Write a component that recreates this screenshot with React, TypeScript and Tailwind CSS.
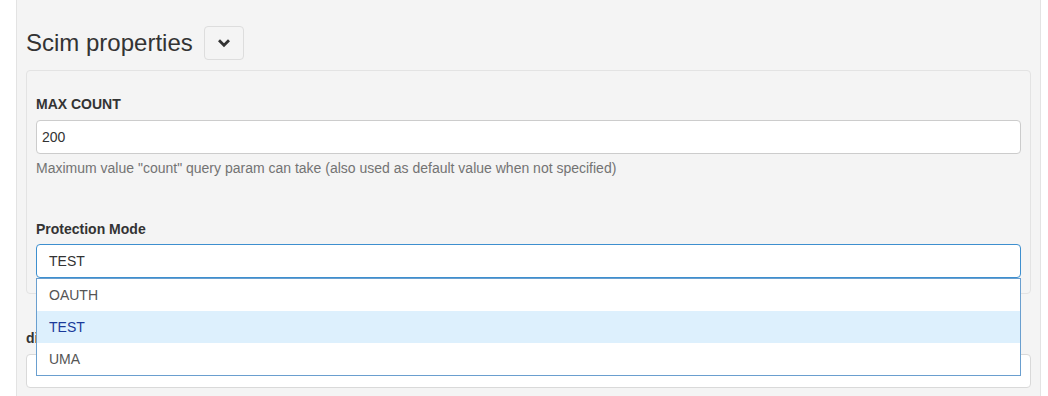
import { useState } from "react";

const options = ["OAUTH", "TEST", "UMA"];

function ChevronDown() {
  return (
    <svg width="12" height="9" viewBox="0 0 12 9" className="text-[#333]">
      <path d="M2 2.2 L6 6.2 L10 2.2" fill="none" stroke="currentColor" strokeWidth="2.8" strokeLinecap="square" />
    </svg>
  );
}

export default function App() {
  const [mode, setMode] = useState("TEST");

  return (
    <div className="h-[396px] w-[1048px] overflow-hidden bg-white pl-4 font-['Liberation_Sans',Arial,sans-serif] text-[14px] text-[#333]">
      <div className="h-full w-[1025px] border-x border-[#e3e3e3] bg-[#f4f4f4] px-[9px] pt-[26px]">
        {/* Header */}
        <div className="flex h-[34px] items-center gap-[11px]">
          <h3 className="text-[24px] leading-[34px] text-[#333]">Scim properties</h3>
          <button className="flex h-[34px] w-[40px] items-center justify-center rounded-[4px] border border-[#ddd] bg-[#f4f4f4]">
            <ChevronDown />
          </button>
        </div>

        {/* Inner panel */}
        <div className="relative mt-[10px] rounded-[4px] border border-[#e3e3e3] bg-[#f4f4f4] px-[9px] pt-[23px] pb-[15px]">
          <div className="h-5 font-bold leading-5">MAX COUNT</div>
          <div className="mt-[6px] flex h-[34px] items-center rounded-[4px] border border-[#ccc] bg-white px-[5px] text-[#333]">
            200
          </div>
          <div className="mt-1 h-5 leading-5 text-[#737373]">
            Maximum value "count" query param can take (also used as default value when not specified)
          </div>

          <div className="mt-[41px] h-5 font-bold leading-5">Protection Mode</div>
          <div className="relative mt-[5px]">
            <div className="flex h-[34px] items-center rounded-[4px] border border-[#3d8fcf] bg-white px-3 text-[#333]">
              {mode}
            </div>
            <ul className="absolute left-0 right-0 top-[34px] z-10 border border-[#6a9fcf] bg-white">
              {options.map((opt) => (
                <li
                  key={opt}
                  onClick={() => setMode(opt)}
                  className={
                    opt === mode
                      ? "flex h-8 items-center bg-[#ddf0fd] px-3 text-[#1a3a9a]"
                      : "flex h-8 items-center px-3 text-[#555]"
                  }
                >
                  {opt}
                </li>
              ))}
            </ul>
          </div>
        </div>

        <div className="mt-[34px] h-5 font-bold leading-5">di</div>
        <div className="mt-[6px] h-[34px] rounded-[4px] border border-[#d9d9d9] bg-white" />
      </div>
    </div>
  );
}
